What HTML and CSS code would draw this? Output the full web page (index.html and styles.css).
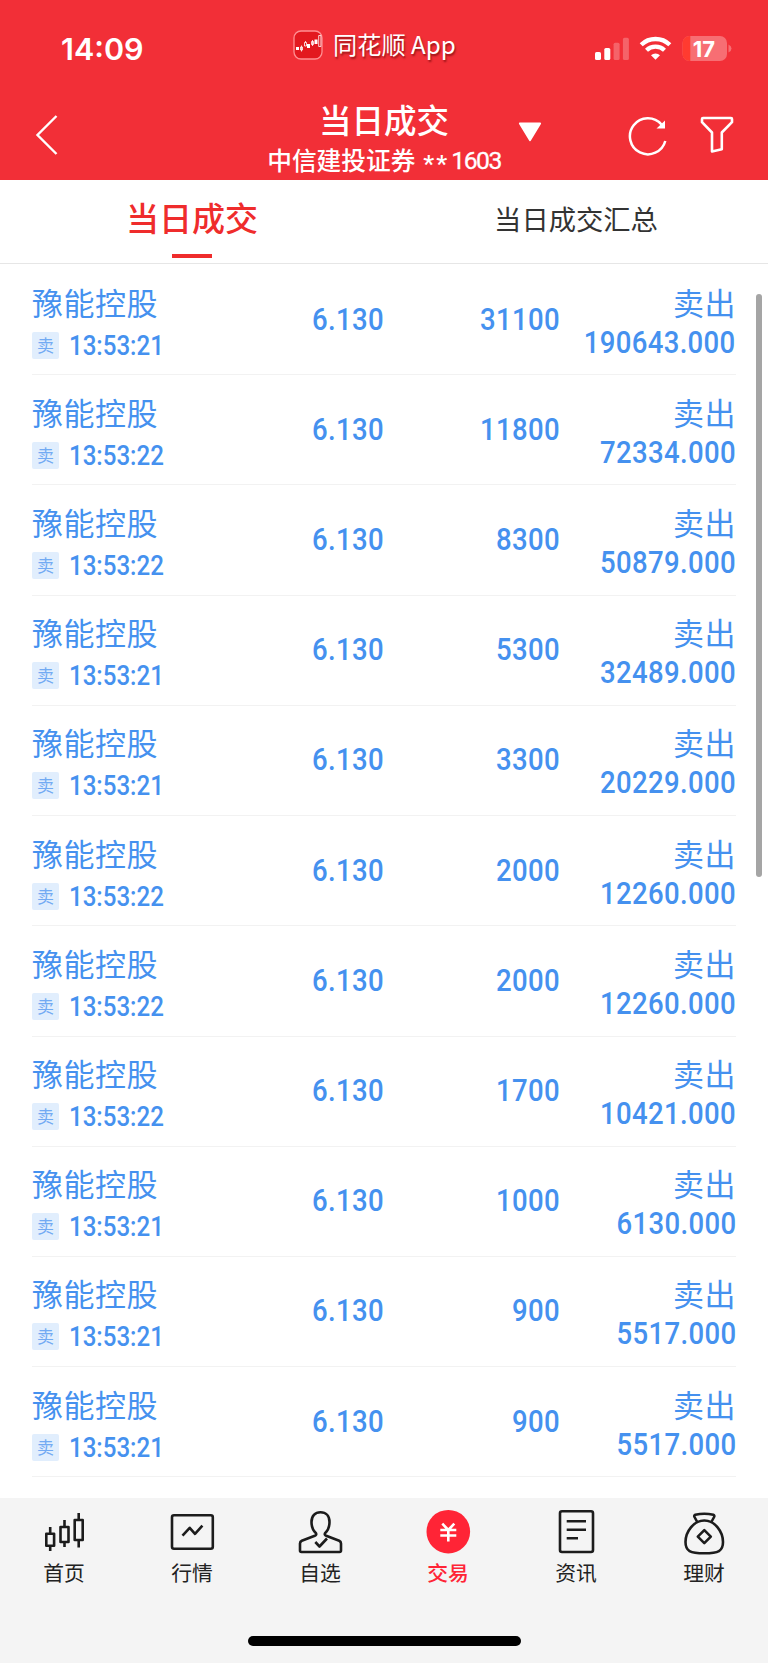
FILE: index.html
```html
<!DOCTYPE html>
<html lang="zh-CN">
<head>
    <meta charset="UTF-8">
    <meta name="viewport" content="width=device-width, initial-scale=1.0">
    <title>当日成交</title>
    <link rel="stylesheet" href="styles.css">
</head>
<body>
    <header class="header">
        <div class="status">
            <span class="clock">14:09</span>
            <div class="app">
                <svg class="app-icon" width="30" height="30" viewBox="0 0 30 30">
                    <rect x="1" y="1" width="28" height="28" rx="7" fill="#e3181f" stroke="#ff8f92" stroke-width="1.3"/>
                    <path d="M3 17h3v3H3zM14 14h3v4h-3zM21.500 9.500h3v4.500h-3z" fill="#fff"/>
                    <path d="M7.500 17h2v3h-2zM8.500 15.500v6M11.500 12.500h2v3.500h-2zM12.500 11v1.500M18.500 11.500h2v3h-2zM19.500 10v6M25.700 5.500h2.200v11h-2.200z" fill="none" stroke="#fff" stroke-width=".8"/>
                </svg>
                <span class="app-name">同花顺 App</span>
            </div>
            <svg class="signals" width="138" height="28" viewBox="0 0 138 28">
                <g fill="#fff">
                    <rect x="0" y="16" width="6" height="8" rx="1.600"/>
                    <rect x="9.300" y="12" width="6" height="12" rx="1.600"/>
                    <rect x="18.600" y="6.700" width="6" height="17.300" rx="1.600" opacity=".25"/>
                    <rect x="27.900" y="1.800" width="6" height="22.200" rx="1.600" opacity=".25"/>
                </g>
                <g fill="none" stroke="#fff" stroke-width="4.300">
                    <path d="M46.200 8.800a20.500 20.500 0 0 1 28.600 0"/>
                    <path d="M51.500 14.300a13 13 0 0 1 18 0"/>
                </g>
                <path d="M56 19.200a6.500 6.500 0 0 1 9 0L60.500 23.800z" fill="#fff"/>
                <rect x="87.500" y="0" width="44.500" height="25" rx="7" fill="#f76e73"/>
                <path d="M95.300 0v25h-.8a7 7 0 0 1-7-7V7a7 7 0 0 1 7-7z" fill="#ff3b30"/>
                <path d="M133.500 8.500q3 1.500 3 4t-3 4z" fill="#f76e73"/>
                <text x="109" y="20.500" text-anchor="middle" class="battery">17</text>
            </svg>
        </div>
        <div class="navbar">
            <svg class="back" width="24" height="42" viewBox="0 0 24 42">
                <path d="M21.500 2L2.500 21l19 19" fill="none" stroke="#fff" stroke-width="2.400"/>
            </svg>
            <div class="heading">
                <h1 class="title">当日成交</h1>
                <p class="account"><span>中信建投证券</span><span class="stars">**</span><span class="account-no">1603</span></p>
            </div>
            <svg class="caret" width="24" height="20" viewBox="0 0 24 20">
                <path d="M2 1.500h20L12 18z" fill="#fff" stroke="#fff" stroke-width="2.200" stroke-linejoin="round"/>
            </svg>
            <svg class="refresh" width="40" height="40" viewBox="0 0 40 40">
                <path d="M37.300 25A18 18 0 1 1 33.500 8.500" fill="none" stroke="#fff" stroke-width="2.500"/>
                <path d="M37 4.500v8h-8.500z" fill="#fff"/>
            </svg>
            <svg class="filter" width="34" height="38" viewBox="0 0 34 38">
                <path d="M3 2h28q1 0 1 1v3.200L21.800 16.500v16.800L12 35.500v-19L2 6.200V3q0-1 1-1z" fill="none" stroke="#fff" stroke-width="2.600" stroke-linejoin="round"/>
            </svg>
        </div>
    </header>

    <nav class="tabs">
        <a class="tab active">当日成交</a>
        <a class="tab">当日成交汇总</a>
    </nav>

    <main class="list">
        <div class="row">
            <div class="stock"><div class="name">豫能控股</div><div class="meta"><span class="tag">卖</span><span class="num time">13:53:21</span></div></div>
            <div class="num price">6.130</div>
            <div class="num qty">31100</div>
            <div class="deal"><div class="side">卖出</div><div class="num">190643.000</div></div>
        </div>
        <div class="row">
            <div class="stock"><div class="name">豫能控股</div><div class="meta"><span class="tag">卖</span><span class="num time">13:53:22</span></div></div>
            <div class="num price">6.130</div>
            <div class="num qty">11800</div>
            <div class="deal"><div class="side">卖出</div><div class="num">72334.000</div></div>
        </div>
        <div class="row">
            <div class="stock"><div class="name">豫能控股</div><div class="meta"><span class="tag">卖</span><span class="num time">13:53:22</span></div></div>
            <div class="num price">6.130</div>
            <div class="num qty">8300</div>
            <div class="deal"><div class="side">卖出</div><div class="num">50879.000</div></div>
        </div>
        <div class="row">
            <div class="stock"><div class="name">豫能控股</div><div class="meta"><span class="tag">卖</span><span class="num time">13:53:21</span></div></div>
            <div class="num price">6.130</div>
            <div class="num qty">5300</div>
            <div class="deal"><div class="side">卖出</div><div class="num">32489.000</div></div>
        </div>
        <div class="row">
            <div class="stock"><div class="name">豫能控股</div><div class="meta"><span class="tag">卖</span><span class="num time">13:53:21</span></div></div>
            <div class="num price">6.130</div>
            <div class="num qty">3300</div>
            <div class="deal"><div class="side">卖出</div><div class="num">20229.000</div></div>
        </div>
        <div class="row">
            <div class="stock"><div class="name">豫能控股</div><div class="meta"><span class="tag">卖</span><span class="num time">13:53:22</span></div></div>
            <div class="num price">6.130</div>
            <div class="num qty">2000</div>
            <div class="deal"><div class="side">卖出</div><div class="num">12260.000</div></div>
        </div>
        <div class="row">
            <div class="stock"><div class="name">豫能控股</div><div class="meta"><span class="tag">卖</span><span class="num time">13:53:22</span></div></div>
            <div class="num price">6.130</div>
            <div class="num qty">2000</div>
            <div class="deal"><div class="side">卖出</div><div class="num">12260.000</div></div>
        </div>
        <div class="row">
            <div class="stock"><div class="name">豫能控股</div><div class="meta"><span class="tag">卖</span><span class="num time">13:53:22</span></div></div>
            <div class="num price">6.130</div>
            <div class="num qty">1700</div>
            <div class="deal"><div class="side">卖出</div><div class="num">10421.000</div></div>
        </div>
        <div class="row">
            <div class="stock"><div class="name">豫能控股</div><div class="meta"><span class="tag">卖</span><span class="num time">13:53:21</span></div></div>
            <div class="num price">6.130</div>
            <div class="num qty">1000</div>
            <div class="deal"><div class="side">卖出</div><div class="num">6130.000</div></div>
        </div>
        <div class="row">
            <div class="stock"><div class="name">豫能控股</div><div class="meta"><span class="tag">卖</span><span class="num time">13:53:21</span></div></div>
            <div class="num price">6.130</div>
            <div class="num qty">900</div>
            <div class="deal"><div class="side">卖出</div><div class="num">5517.000</div></div>
        </div>
        <div class="row">
            <div class="stock"><div class="name">豫能控股</div><div class="meta"><span class="tag">卖</span><span class="num time">13:53:21</span></div></div>
            <div class="num price">6.130</div>
            <div class="num qty">900</div>
            <div class="deal"><div class="side">卖出</div><div class="num">5517.000</div></div>
        </div>
        <div class="scrollbar"></div>
    </main>

    <footer class="tabbar">
        <div class="items">
            <a class="item">
                <svg class="icon" viewBox="0 0 48 50">
                    <path d="M6.300 27.700h7.800v12H6.300zM10.200 21v6.700M10.200 39.700V45M20.500 21h8v15h-8zM24.500 14v7M24.500 36v5M34.700 14h8v20h-8zM38.700 7v7M38.700 34v7.500"/>
                </svg>
                <span>首页</span>
            </a>
            <a class="item">
                <svg class="icon" viewBox="0 0 48 50">
                    <rect x="4" y="9.300" width="40.800" height="33.500" rx="2"/>
                    <path d="M14.500 29.700l7.200-7.900 5.300 6 7.400-8.200"/>
                </svg>
                <span>行情</span>
            </a>
            <a class="item">
                <svg class="icon" viewBox="0 0 48 50">
                    <path d="M20 27.300C16.500 24 15.500 20 15.500 16c0-6 3.500-9.700 9-9.700s9 3.700 9 9.700c0 4-1 8-4.500 11.300q-.8 1.700 1.200 2.500l13 4.900q1.800.8 1.800 2.800v7q0 1.500-1.500 1.500h-38Q4 46 4 44.500v-7q0-2 1.800-2.800l13-4.900q2-.8 1.200-2.500z"/>
                    <path d="M19.300 36l4.200 4.500 7.500-8"/>
                </svg>
                <span>自选</span>
            </a>
            <a class="item current">
                <svg class="icon" viewBox="0 0 48 50">
                    <circle cx="24.300" cy="25.700" r="21.800" fill="#ff2436" stroke="none"/>
                    <path d="M18.300 17.700l6 6.300 6-6.300M16.300 24h16M16.300 29.500h16M24.300 24v11.500" stroke="#fff"/>
                </svg>
                <span>交易</span>
            </a>
            <a class="item">
                <svg class="icon" viewBox="0 0 48 50">
                    <rect x="8" y="5.300" width="33" height="40.700" rx="2"/>
                    <path d="M14.700 15.300H34M14.700 23.700H34M14.700 32.300H26"/>
                </svg>
                <span>资讯</span>
            </a>
            <a class="item">
                <svg class="icon" viewBox="0 0 48 50">
                    <path d="M17.500 16.500l-3-5.500q-.8-1.500.8-2.200 9-2.200 18 0 1.600.7.800 2.200l-3 5.500"/>
                    <path d="M24.300 14.500c10.500 0 18.700 11 18.700 21.500 0 9-4.500 11.300-18.700 11.300S5.500 45 5.500 36c0-10.500 8.300-21.500 18.800-21.500z"/>
                    <path d="M24.300 24.200l6.500 6.500-6.500 6.500-6.500-6.500z"/>
                </svg>
                <span>理财</span>
            </a>
        </div>
        <div class="home-bar"></div>
    </footer>
</body>
</html>
```
FILE: styles.css
```css
* { box-sizing: border-box; }
body { margin: 0; width: 768px; background: #fff; font-family: "Noto Sans CJK SC", sans-serif; color: #333; }
h1, p { margin: 0; }
svg { display: block; flex: none; }

/* header */
.header { height: 179.500px; background: #f22f37; color: #fff; }
.status { display: flex; height: 96px; padding: 30px 35px 0 61px; }
.clock { width: 232px; font: 600 30.500px/38px Inter, sans-serif; }
.app { display: flex; flex: 1; gap: 10px; }
.app-name { font-size: 24.200px; line-height: 27px; white-space: nowrap; text-shadow: 1px 2px 2px rgba(90, 0, 0, .6); }
.signals { margin-top: 6px; }
.battery { font: 700 22px Inter, sans-serif; fill: #fff; }
.navbar { display: flex; padding-left: 35px; }
.back { margin-top: 18px; }
.heading { width: 250px; margin-left: 200px; text-align: center; white-space: nowrap; }
.title { font-size: 32.500px; font-weight: 500; line-height: 46px; }
.account { display: flex; justify-content: center; font-size: 24.700px; font-weight: 500; line-height: 26px; margin-top: 4px; }
.stars { margin: 5px 2px 0 8px; font-family: Roboto, sans-serif; letter-spacing: 2px; }
.account-no { margin-top: 2px; font-family: Roboto, sans-serif; font-weight: 400; letter-spacing: -1.500px; -webkit-text-stroke: .3px #fff; }
.caret { margin: 26px 0 0 9px; }
.refresh { margin: 20px 0 0 86px; }
.filter { margin: 20px 0 0 32px; }

/* tabs */
.tabs { display: flex; height: 84.500px; border-bottom: 1px solid #e6e6e6; }
.tab { flex: 1; padding-top: 18px; font-size: 27.300px; line-height: 40px; text-align: center; }
.tab.active { display: flex; flex-direction: column; align-items: center; padding-top: 17px; font-size: 33px; font-weight: 500; color: #ef2c2c; }
.tab.active::after { content: ""; width: 40px; height: 4px; margin-top: 17px; background: #ef2c2c; }

/* trades */
.list { position: relative; height: 1234.300px; padding: 1px 32px 0; color: #4591ef; }
.row { display: grid; grid-template-columns: 200px 152px 176px minmax(0, 1fr); height: 110.220px; border-bottom: 1px solid #f2f2f2; white-space: nowrap; }
.name, .side { font-size: 31px; letter-spacing: .5px; line-height: 40px; padding-top: 16.500px; }
.meta { display: flex; align-items: center; margin-top: 10px; }
.tag { width: 27px; height: 27px; margin-right: 10px; border-radius: 2px; background: #e1eefd; font-size: 17px; line-height: 25px; text-align: center; color: #72aaf3; }
.num { font-family: Roboto, sans-serif; font-size: 32px; font-weight: 500; line-height: 40px; letter-spacing: .4px; text-align: right; transform: scaleX(.86); transform-origin: right; }
.price, .qty { padding-top: 33.500px; }
.deal { display: flex; flex-direction: column; align-items: flex-end; }
.time { font-size: 28px; line-height: 27px; letter-spacing: 0; transform-origin: left; }
.scrollbar { position: absolute; top: 30px; right: 6px; width: 6px; height: 583px; border-radius: 3px; background: #a5a5a5; }

/* bottom bar */
.tabbar { height: 164.700px; padding-top: 8px; background: #f4f4f4; }
.items { display: flex; }
.item { flex: 1; display: flex; flex-direction: column; align-items: center; font-size: 20.800px; line-height: 32px; color: #222; }
.item.current { color: #ff2436; font-weight: 500; }
.icon { width: 48px; height: 50px; fill: none; stroke: #1c1c1c; stroke-width: 2.600; stroke-linejoin: round; }
.home-bar { width: 273px; height: 10px; margin: 48px 0 0 248px; border-radius: 5px; background: #000; }
```
